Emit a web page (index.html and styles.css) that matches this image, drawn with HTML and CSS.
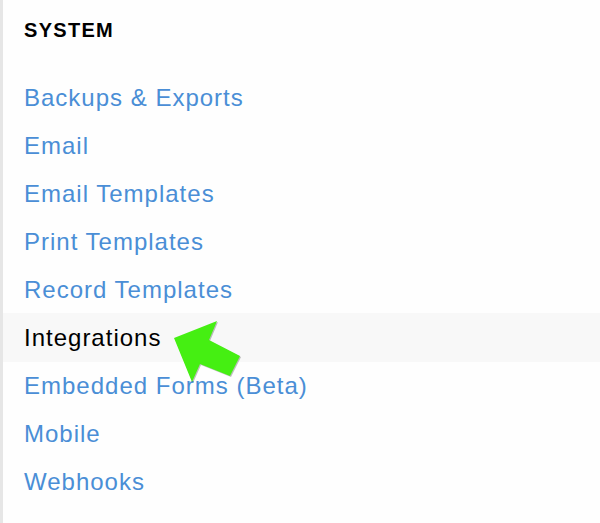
FILE: index.html
```html
<!DOCTYPE html>
<html>
<head>
<meta charset="utf-8">
<link rel="stylesheet" href="styles.css">
</head>
<body>
<div class="panel">
  <h2 class="title">SYSTEM</h2>
  <ul class="menu">
    <li class="item"><a href="#">Backups &amp; Exports</a></li>
    <li class="item"><a href="#">Email</a></li>
    <li class="item"><a href="#">Email Templates</a></li>
    <li class="item"><a href="#">Print Templates</a></li>
    <li class="item"><a href="#">Record Templates</a></li>
    <li class="item active"><span>Integrations</span></li>
    <li class="item"><a href="#">Embedded Forms (Beta)</a></li>
    <li class="item"><a href="#">Mobile</a></li>
    <li class="item"><a href="#">Webhooks</a></li>
  </ul>
  <svg class="arrow" width="80" height="70" viewBox="0 0 80 70">
    <polygon class="arrow-shadow" points="5,24 48,7 40,26 71,42 61,62 31,50 23,68"/>
    <polygon class="arrow-fill" points="4,23 47,6 39,25 70,41 60,61 30,49 22,67"/>
  </svg>
</div>
</body>
</html>
```
FILE: styles.css
```css
html, body {
  margin: 0;
  padding: 0;
  background: #fefefe;
}
body {
  font-family: "Liberation Sans", Arial, Helvetica, sans-serif;
  width: 600px;
  height: 523px;
  overflow: hidden;
}
.panel {
  position: relative;
  border-left: 3px solid #e6e6e6;
  height: 523px;
  box-sizing: border-box;
}
.title {
  margin: 0;
  padding: 18px 0 0 21px;
  height: 74px;
  box-sizing: border-box;
  font-size: 20px;
  font-weight: bold;
  line-height: 24px;
  color: #000;
  letter-spacing: 1.3px;
}
.menu {
  list-style: none;
  margin: 0;
  padding: 0;
}
.item {
  height: 48px;
  display: flex;
  align-items: center;
  padding-left: 21px;
  font-size: 24px;
  letter-spacing: 1px;
}
.item a {
  color: #4a8ed6;
  text-decoration: none;
}
.item.active {
  background: #f8f8f8;
  height: 49px;
  margin-top: -1px;
  color: #000;
}
.arrow {
  position: absolute;
  left: 167px;
  top: 315px;
}
.arrow-shadow {
  fill: rgba(0, 0, 0, 0.25);
}
.arrow-fill {
  fill: #45ef12;
}
```
